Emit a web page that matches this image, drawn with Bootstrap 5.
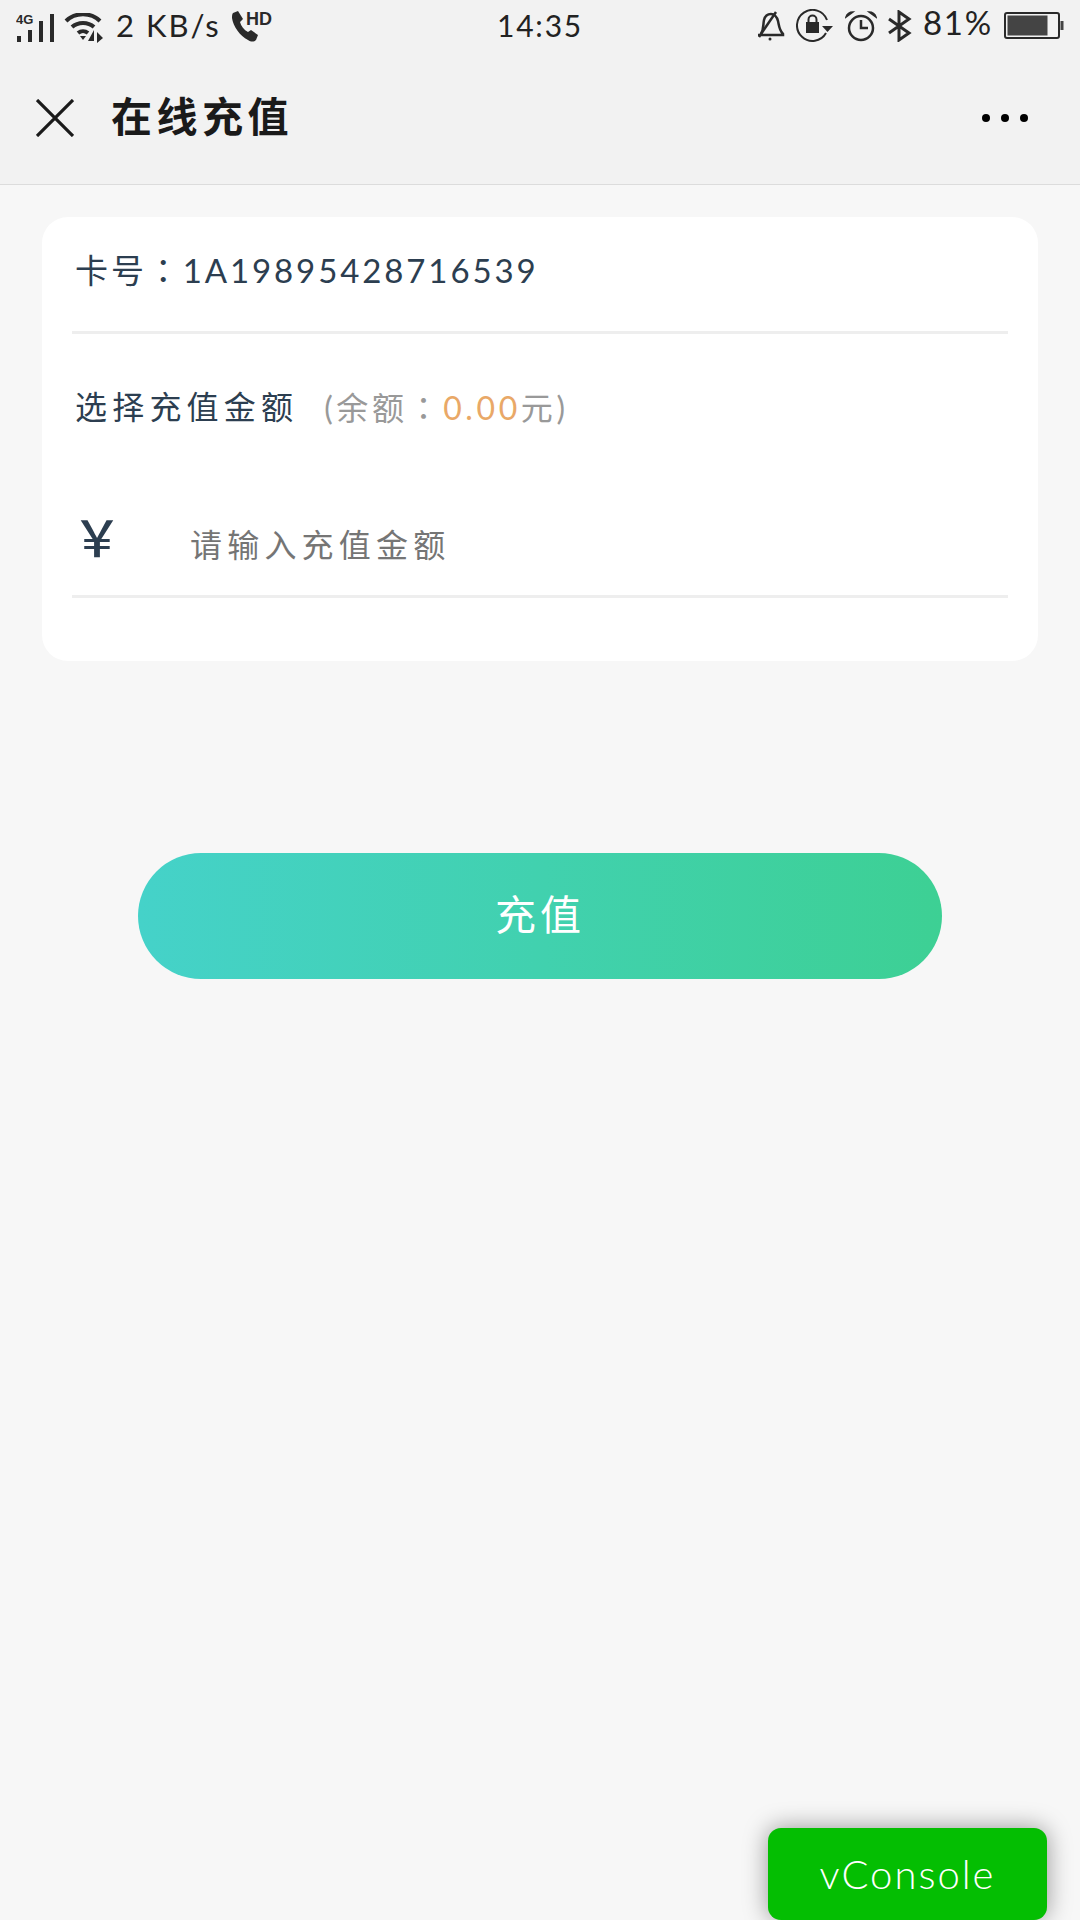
<!DOCTYPE html>
<html lang="zh-CN">
<head>
  <meta charset="UTF-8" />
  <meta name="viewport" content="width=device-width, initial-scale=1.0"/>
  <title>在线充值</title>
  <link href="https://cdn.jsdelivr.net/npm/bootstrap@5.3.2/dist/css/bootstrap.min.css" rel="stylesheet" />
  <style>
    html, body { height: 1920px; overflow: hidden; }
    body { background: #f7f7f7; font-family: "Lato", "Noto Sans CJK SC", sans-serif; color: #2c3e50; position: relative; }
    .top-area { background: #f2f2f2; border-bottom: 1px solid #dcdcdc; height: 185px; }
    .status-line { height: 52px; padding: 0 16px; color: #222; }
    .status-side { flex: 1 1 0; }
    .status-right { gap: 11px; }
    .status-line svg { display: block; flex: none; }
    .status-text { font-size: 31px; letter-spacing: 2px; line-height: 1; white-space: nowrap; margin: -2px 10px 0 12px; }
    .status-pct { font-size: 33px; letter-spacing: 1.8px; line-height: 1; margin-top: -8px; }
    .status-time { font-size: 30px; letter-spacing: 1.8px; line-height: 1; margin-top: -2px; }
    .title-line { height: 132px; padding: 0 52px 0 36px; }
    .page-title { font-size: 41px; font-weight: 700; letter-spacing: 4.5px; color: #1a1a1a; margin: -4px 0 0 37px; line-height: 1; }
    .dots-icon { margin-left: auto; }
    .pay-card { margin: 32px 42px 0; background: #fff; border-radius: 26px; height: 444px; padding: 0 30px; }
    .pay-row { padding-left: 3px; }
    .card-no { height: 117px; padding-bottom: 7px; border-bottom: 3px solid #eee; font-size: 33px; letter-spacing: 2.9px; }
    .mid-colon { font-family: "Noto Sans CJK TC", sans-serif; }
    .pick-line { height: 148px; padding-bottom: 3px; font-size: 32px; letter-spacing: 5.2px; }
    .pick-hint { color: #999; margin-left: 26px; letter-spacing: 3.6px; }
    .pick-money { color: #e9a867; }
    .amount-line { height: 116px; border-bottom: 3px solid #eee; padding-top: 13px; }
    .yen-mark { flex: none; font-size: 50px; line-height: 1; font-weight: 500; width: 115px; margin-top: -14px; margin-left: -3px; color: #2c3e50; }
    .amount-input { font-size: 32px; letter-spacing: 5.2px; margin-left: 3px; padding: 0; border: 0; background: transparent; font-family: inherit; box-shadow: none !important; }
    .amount-input::placeholder { color: #757575; opacity: 1; }
    .pay-btn { display: block; width: 804px; height: 126px; margin: 192px auto 0; padding-bottom: 8px; border: 0; color: #fff; font-size: 41px; letter-spacing: 4px; background: linear-gradient(90deg, #45d2c9, #3dd094); }
    .pay-btn:hover, .pay-btn:active { color: #fff; background: linear-gradient(90deg, #45d2c9, #3dd094); }
    .vconsole-btn { position: absolute; left: 768px; top: 1828px; width: 279px; height: 92px; border-radius: 13px; background: #04be02; color: #fff; font-size: 40px; font-weight: 300; line-height: 92px; text-align: center; font-family: "Lato", sans-serif; letter-spacing: 2px; box-shadow: 0 0 24px rgba(0,0,0,.4); }
  </style>
</head>
<body>

  <div class="top-area">
    <div class="status-line d-flex align-items-center">
      <div class="status-side d-flex align-items-center">
        <svg width="40" height="30" viewBox="0 0 40 30" fill="#2a2a2a" style="margin-top:3px">
          <text x="0" y="11" font-family="Liberation Sans" font-size="13" font-weight="700">4G</text>
          <rect x="1" y="23" width="4" height="6"/><rect x="12" y="17" width="4" height="12"/><rect x="23" y="8" width="4" height="21"/><rect x="34" y="1" width="4" height="28"/>
        </svg>
        <svg class="ms-2" width="40" height="30" viewBox="0 0 40 30" fill="none" stroke="#2a2a2a" style="margin-top:3px">
          <path d="M2 8C11-1 27-1 36 8" stroke-width="4"/><path d="M8 14c6-5.500 16-5.500 22 0" stroke-width="4"/>
          <path d="M14 20c3-2.500 7-2.500 10 0" stroke-width="4"/><path d="M16 23h6l-3 4z" fill="#2a2a2a" stroke="none"/>
          <path d="M30 17v11h-6zM33 19l6 6-6 5z" fill="#2a2a2a" stroke="none"/>
        </svg>
        <span class="status-text">2 KB/s</span>
        <svg width="42" height="32" viewBox="0 0 42 32" fill="#2a2a2a">
          <path d="M2 3l5-2 5 8-3 3c1 4 4 8 8 10l3-2 7 5-2 5c-2 2-5 2-8 0C9 26 2 16 1 8c0-2 0-4 1-5z"/>
          <text x="15" y="15" font-family="Liberation Sans" font-size="18" font-weight="700">HD</text>
        </svg>
      </div>
      <div class="status-time">14:35</div>
      <div class="status-side status-right d-flex align-items-center justify-content-end">
        <svg width="30" height="32" viewBox="0 0 30 32" fill="none" stroke="#2a2a2a" stroke-width="2.500">
          <path d="M6 24c3-5 2-10 3-14 1-4 4-6 7-6 3 0 6 3 7 7 1 4 1 9 5 13v1H3"/><path d="M4 27L21 2"/><circle cx="15" cy="29" r="1.500" fill="#2a2a2a" stroke="none"/>
        </svg>
        <svg width="38" height="34" viewBox="0 0 38 34" fill="none" stroke="#2a2a2a" stroke-width="2">
          <path d="M30 24A15.500 15.500 0 1 1 31 11"/><path d="M26 17h11l-5.500 6z" fill="#2a2a2a" stroke="none"/>
          <rect x="10" y="13" width="13" height="11" fill="#2a2a2a" stroke="none"/><path d="M12.500 13v-2.500a4 4 0 0 1 8 0V13" stroke-width="2"/>
        </svg>
        <svg width="32" height="32" viewBox="0 0 32 32" fill="none" stroke="#2a2a2a" stroke-width="2.500">
          <circle cx="16" cy="18" r="12"/><path d="M16 10v8h7"/><path d="M1 7c1-3 4-5 7-5zM31 7c-1-3-4-5-7-5z" fill="#2a2a2a" stroke-width="1.500"/>
        </svg>
        <svg width="24" height="32" viewBox="0 0 24 32" fill="none" stroke="#2a2a2a" stroke-width="3">
          <path d="M1 9l20 14-10 7V2l10 7L1 23"/>
        </svg>
        <span class="status-pct">81%</span>
        <svg width="60" height="28" viewBox="0 0 60 28" fill="none">
          <rect x="1" y="1" width="54" height="25" rx="2" stroke="#2a2a2a" stroke-width="2"/>
          <rect x="3.500" y="3.500" width="40" height="20" fill="#444"/><rect x="56.500" y="9" width="3" height="9" fill="#444"/>
        </svg>
      </div>
    </div>

    <div class="title-line d-flex align-items-center">
      <svg width="38" height="38" viewBox="0 0 38 38" stroke="#1a1a1a" stroke-width="3.200"><path d="M1 1l36 36M37 1L1 37"/></svg>
      <h1 class="page-title">在线充值</h1>
      <svg class="dots-icon" width="46" height="10" viewBox="0 0 46 10" fill="#000"><circle cx="4" cy="5" r="4"/><circle cx="23" cy="5" r="4"/><circle cx="42" cy="5" r="4"/></svg>
    </div>
  </div>

  <div class="pay-card">
    <div class="pay-row card-no d-flex align-items-center"><span>卡号<span class="mid-colon" lang="zh-TW">：</span>1A19895428716539</span></div>
    <div class="pay-row pick-line d-flex align-items-center">
      <span>选择充值金额</span>
      <span class="pick-hint">(余额<span class="mid-colon" lang="zh-TW">：</span><span class="pick-money">0.00</span>元)</span>
    </div>
    <div class="pay-row amount-line d-flex align-items-center">
      <span class="yen-mark">￥</span>
      <input type="text" class="form-control amount-input" placeholder="请输入充值金额" />
    </div>
  </div>

  <button type="button" class="btn rounded-pill pay-btn">充值</button>

  <div class="vconsole-btn">vConsole</div>

  <script src="https://cdn.jsdelivr.net/npm/bootstrap@5.3.2/dist/js/bootstrap.bundle.min.js"></script>
</body>
</html>
